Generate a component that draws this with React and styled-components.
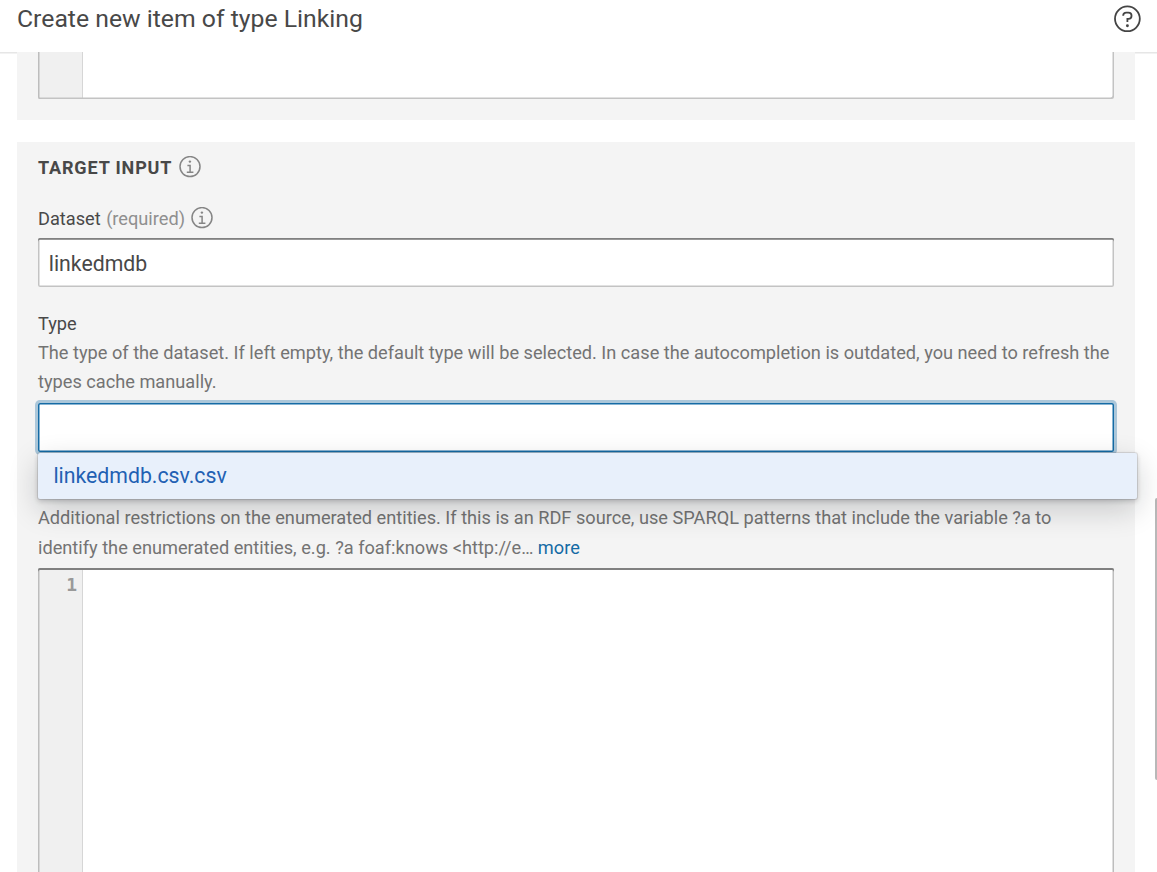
import React from "react";
import styled, { createGlobalStyle } from "styled-components";

const GlobalStyle = createGlobalStyle`
  * { box-sizing: border-box; }
  html, body { margin: 0; background: #fff; }
  body { font-family: Roboto, "Liberation Sans", sans-serif; color: #484848; overflow: hidden; }
`;

const Dialog = styled.main`
  position: relative;
  display: flex;
  flex-direction: column;
  width: 1157px;
  height: 872px;
  overflow: hidden;
`;

const Header = styled.header`
  display: flex;
  flex: none;
  justify-content: space-between;
  align-items: flex-start;
  height: 52px;
  padding: 5px 16px 0 17px;
`;

const Title = styled.h1`
  margin: 0;
  font-size: 24.75px;
  line-height: 28px;
  font-weight: 400;
  white-space: nowrap;
`;

const Body = styled.div`
  display: flex;
  flex: 1;
  flex-direction: column;
  gap: 22px;
  min-height: 0;
  padding: 0 22px 0 17.4px;
  overflow: hidden;
  box-shadow: inset 0 1.5px 0 #e6e6e6;
`;

const Section = styled.section`
  flex: none;
  padding: 0 21.4px 21px 20.6px;
  background: #f4f4f4;
`;

const SectionTitle = styled.h2`
  display: flex;
  align-items: center;
  gap: 7px;
  height: 50px;
  margin: 0;
  font-size: 18px;
  font-weight: 700;
  letter-spacing: 0.85px;
`;

const Label = styled.div`
  display: flex;
  align-items: center;
  gap: 5.5px;
  height: ${(p) => p.$height}px;
  padding-top: ${(p) => p.$top || 0}px;
  font-size: 18.2px;
`;

const Required = styled.span`
  color: #8f8f8f;
`;

const Description = styled.p`
  margin: ${(p) => p.$margin};
  color: #737373;
  font-size: 18.21px;
  line-height: ${(p) => p.$leading}px;
  white-space: nowrap;
`;

const MoreLink = styled.a`
  color: #146ba5;
`;

const Input = styled.div`
  position: relative;
  height: 49.4px;
  margin-bottom: -0.4px;
  padding: 0 10.8px;
  border-radius: 2px;
  background: #fff;
  font-size: 21.25px;
  line-height: 52px;
  box-shadow: ${(p) =>
    p.$focused
      ? "inset 0 0 0 1.5px #146ba5, 0 0 0 3px rgba(20,107,165,.32)"
      : "inset 0 1.7px 0 #808080, inset 0 0 0 1.5px #c3c3c3"};
`;

const Menu = styled.div`
  position: absolute;
  z-index: 2;
  top: 50px;
  left: 0;
  width: 1099px;
  height: 46px;
  padding-left: 15.4px;
  border-radius: 2px;
  background: #e8f0fb;
  color: #2260b3;
  font-size: 21.25px;
  line-height: 45.6px;
  box-shadow: 0 0 0 1px rgba(16,22,26,.1), 0 2px 5px rgba(16,22,26,.22), 0 10px 30px rgba(16,22,26,.2);
`;

const Editor = styled.div`
  position: relative;
  display: flex;
  height: ${(p) => p.$height}px;
  margin-bottom: ${(p) => (p.$tail ? "-0.4px" : "0")};
  border-radius: ${(p) => (p.$tail ? "0 0 2px 2px" : "2px")};
  background: #fff;
  &::after {
    content: "";
    position: absolute;
    inset: 0;
    border-radius: inherit;
    box-shadow: ${(p) =>
      p.$tail
        ? "inset 1.5px 0 0 #bdbdbd, inset -1.5px -1.5px 0 #c3c3c3"
        : "inset 0 2px 0 #808080, inset 0 0 0 1.5px #bdbdbd"};
  }
`;

const Gutter = styled.div`
  width: 45px;
  padding: 5px 5px 0 0;
  border-right: 1px solid #d6d6d6;
  background: #f0f0f0;
  color: #999;
  font: 700 18px/24px "DejaVu Sans Mono", "Liberation Mono", monospace;
  text-align: right;
`;

const Scrollbar = styled.div`
  position: absolute;
  top: 498px;
  right: 0;
  width: 2px;
  height: 282px;
  border-radius: 2px 0 0 2px;
  background: #b8b8b8;
`;

const InfoIcon = () => (
  <svg width="22" height="22" viewBox="0 0 22 22" fill="none" stroke="#858585" strokeWidth="1.5">
    <circle cx="11" cy="10.6" r="10" />
    <path d="M8.4 9.5H11.1V16M7.8 16.2H14.4" />
    <circle cx="10.9" cy="5.6" r="1.2" fill="#858585" stroke="none" />
  </svg>
);

const HelpIcon = () => (
  <svg width="28" height="28" viewBox="0 0 28 28" fill="none" stroke="#444" strokeWidth="1.8">
    <circle cx="14.4" cy="13.8" r="12.4" />
    <path d="M10.2 10.8V10.4A3 3 0 0 1 13.2 7.6H15.4A3.15 3.15 0 0 1 15.4 13.9H14.4V17" />
    <circle cx="14.4" cy="20.8" r="1.45" fill="#444" stroke="none" />
  </svg>
);

export default function App() {
  return (
    <>
      <GlobalStyle />
      <Dialog>
        <Header>
          <Title>Create new item of type Linking</Title>
          <HelpIcon />
        </Header>
        <Body>
          <Section>
            <Editor $height={47.4} $tail>
              <Gutter />
            </Editor>
          </Section>
          <Section>
            <SectionTitle>
              TARGET INPUT <InfoIcon />
            </SectionTitle>
            <Label $height={46} $top={6}>
              <span>Dataset</span>
              <Required>(required)</Required>
              <InfoIcon />
            </Label>
            <Input>linkedmdb</Input>
            <Label $height={73}>Type</Label>
            <Description $leading={29} $margin="-22px 0 7px">
              The type of the dataset. If left empty, the default type will be selected. In case the autocompletion is outdated, you need to refresh the
              <br />
              types cache manually.
            </Description>
            <Input $focused>
              <Menu>linkedmdb.csv.csv</Menu>
            </Input>
            <Description $leading={30} $margin="51px 0 5px">
              Additional restrictions on the enumerated entities. If this is an RDF source, use SPARQL patterns that include the variable ?a to
              <br />
              identify the enumerated entities, e.g. ?a foaf:knows &lt;http://e… <MoreLink>more</MoreLink>
            </Description>
            <Editor $height={420}>
              <Gutter>1</Gutter>
            </Editor>
          </Section>
        </Body>
        <Scrollbar />
      </Dialog>
    </>
  );
}
